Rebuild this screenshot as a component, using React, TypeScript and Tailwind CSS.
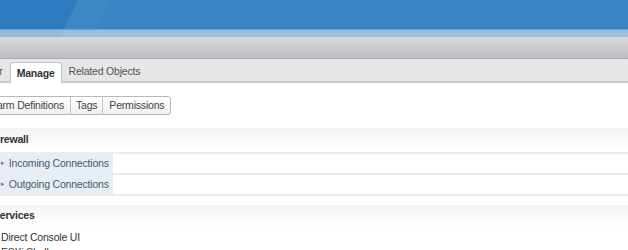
import React from "react";

export default function App() {
  return (
    <div
      className="w-[628px] h-[250px] overflow-hidden bg-white text-[10.5px] tracking-[-0.2px] text-[#333]"
      style={{ fontFamily: '"Liberation Sans", Arial, sans-serif' }}
    >
      {/* blue header */}
      <div className="relative h-[29px] bg-[#3a84c3] overflow-hidden">
        <svg className="absolute left-0 top-0" width="628" height="29" viewBox="0 0 628 29">
          <polygon points="0,0 78,0 64,29 0,29" fill="#2e7bc1" />
          <polygon points="78,0 110,0 96,29 64,29" fill="#4a8fca" opacity="0.35" />
        </svg>
      </div>
      <div className="relative h-[8px] bg-[#9dbedc] border-t border-[#6a9fcf] overflow-hidden">
        <svg className="absolute left-0 top-0" width="628" height="8" viewBox="0 0 628 8">
          <polygon points="0,0 63,0 60,8 0,8" fill="#98b9da" />
        </svg>
      </div>
      {/* grey bar */}
      <div className="h-[22px] bg-[linear-gradient(#dadade,#bdbdc1)] border-b border-[#a9a9ad]" />
      {/* tabs */}
      <div className="h-[24px] bg-[#e6e6e6] border-b-2 border-[#cbcbcb] flex items-end">
        <div className="ml-[-38px] h-[20px] px-[7px] pt-[2px] flex items-center text-[#555]">Monitor</div>
        <div className="h-[21px] -mb-[2px] px-[6px] pt-[2px] flex items-center font-bold text-[#333] bg-white border border-b-0 border-[#c4c4c4] rounded-t-[4px]">
          Manage
        </div>
        <div className="h-[20px] px-[7px] pt-[2px] flex items-center text-[#555]">Related Objects</div>
      </div>
      {/* content */}
      <div className="ml-[-9px]">
        <div className="mt-[13px] flex">
          <div className="flex h-[19px] border border-[#b8b8b8] rounded-[3px] bg-[linear-gradient(#ffffff,#f0f0f0)] text-[#444] ml-[-10px]">
            <div className="px-[6px] flex items-center border-r border-[#c4c4c4]">Alarm Definitions</div>
            <div className="px-[5px] flex items-center border-r border-[#c4c4c4]">Tags</div>
            <div className="px-[6px] flex items-center">Permissions</div>
          </div>
        </div>
        <div className="mt-[13px] h-[24px] flex items-center font-bold text-[#333] bg-[linear-gradient(#f3f3f3,#ffffff)]">
          Firewall
        </div>
        <div className="h-[2px] bg-[#ececec]" />
        <div className="h-[21px] flex border-b-2 border-[#ececec]">
          <div className="w-[122px] flex items-center bg-[#e7edf4] text-[#4e5a66] pl-[10px]">
            <span className="text-[7px] text-[#777] mr-[4px]">▸</span>
            Incoming Connections
          </div>
        </div>
        <div className="h-[21px] flex border-b-2 border-[#ececec]">
          <div className="w-[122px] flex items-center bg-[#e7edf4] text-[#4e5a66] pl-[10px]">
            <span className="text-[7px] text-[#777] mr-[4px]">▸</span>
            Outgoing Connections
          </div>
        </div>
        <div className="mt-[9px] h-[22px] flex items-center pl-[2px] font-bold text-[#333] bg-[linear-gradient(#f4f4f4,#ffffff)]">
          Services
        </div>
        <div className="pl-[10px] mt-[3px] leading-[15px] text-[#333]">
          <div>Direct Console UI</div>
          <div>ESXi Shell</div>
        </div>
      </div>
    </div>
  );
}
